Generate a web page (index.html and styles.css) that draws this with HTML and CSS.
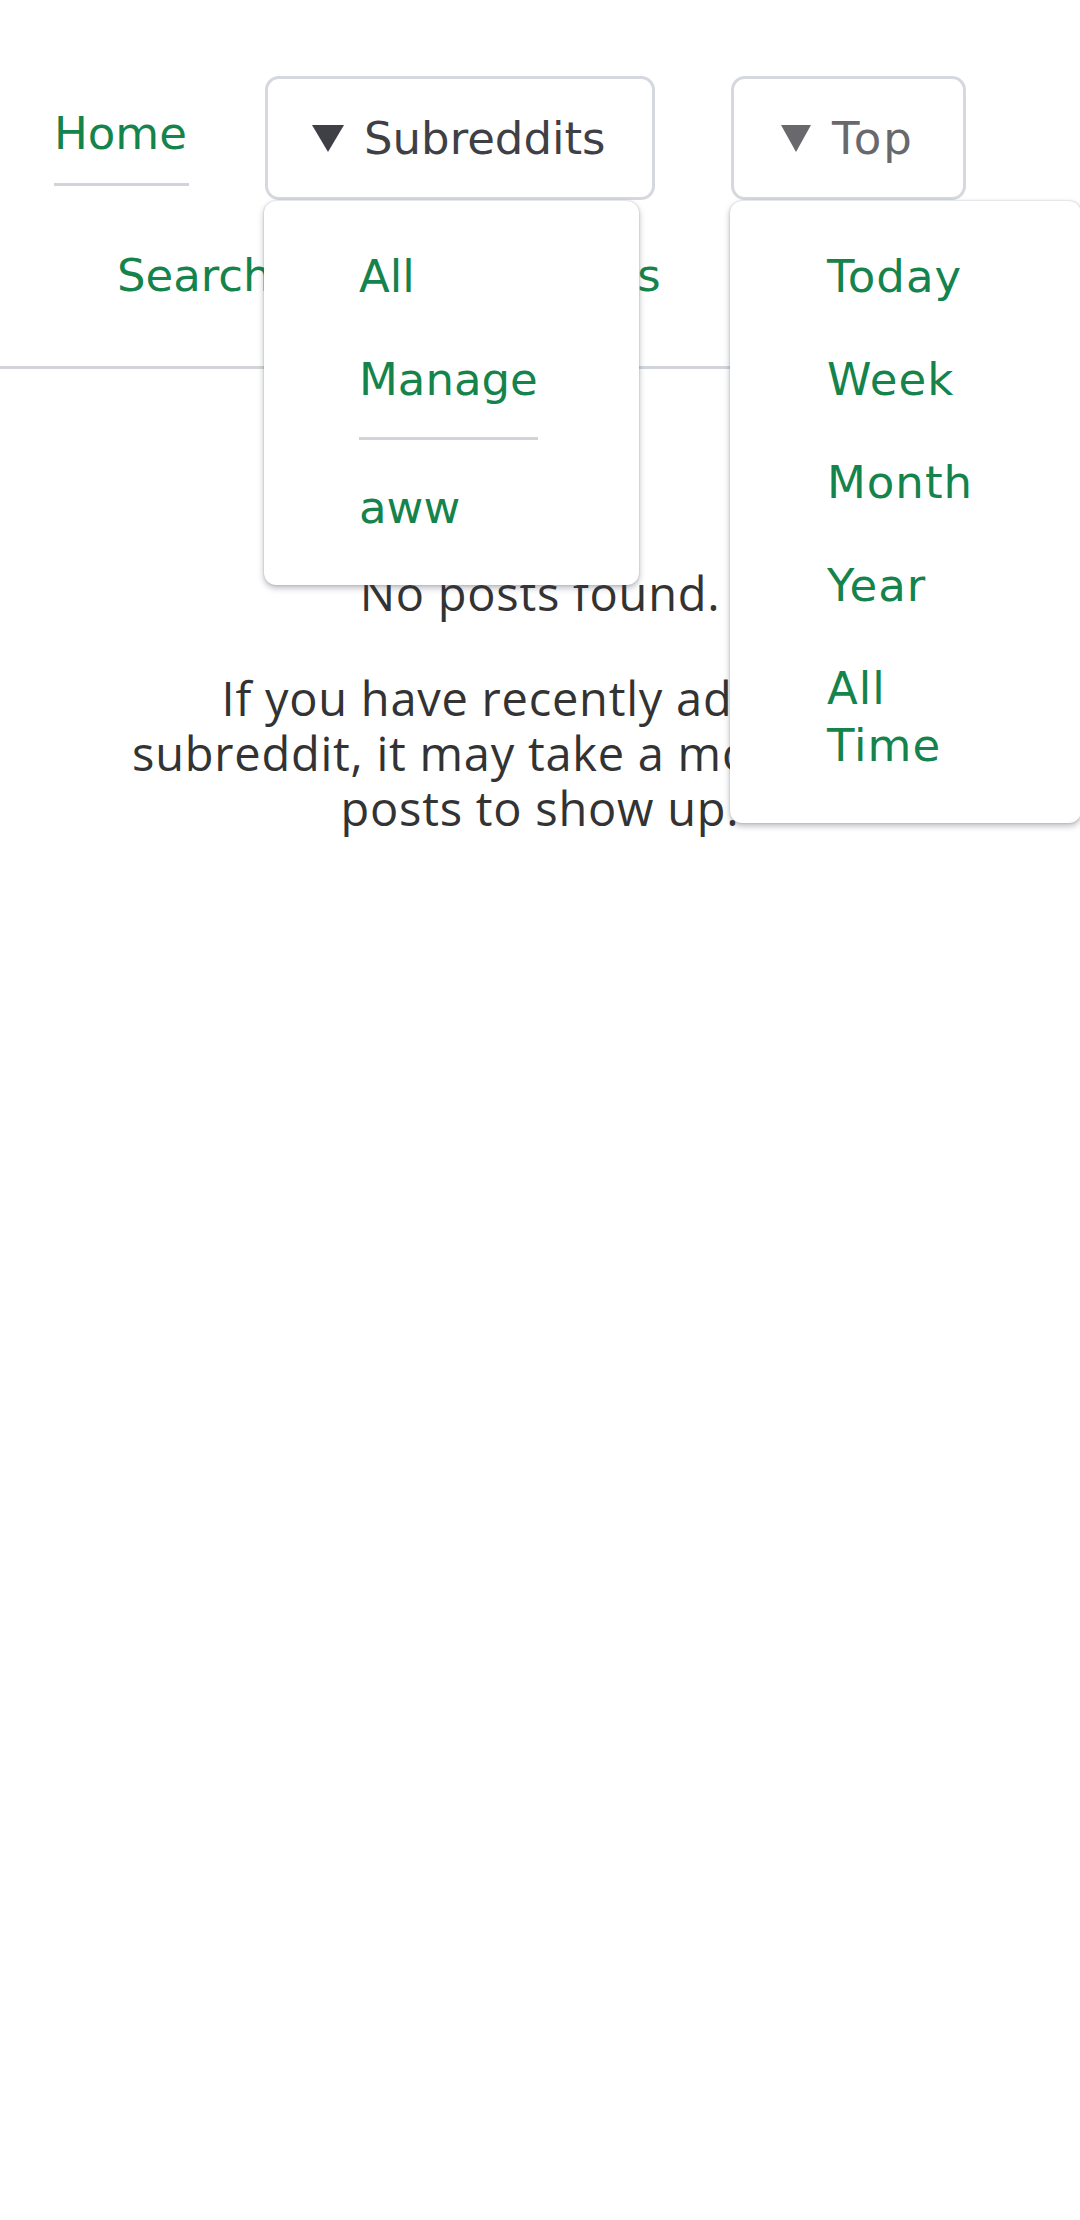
FILE: index.html
```html
<!DOCTYPE html>
<html lang="en">
<head>
<meta charset="utf-8">
<title>Reddit viewer</title>
<link rel="stylesheet" href="styles.css">
</head>
<body>
<header class="nav">
  <div class="nav-row">
    <a class="nav-link active" href="#">Home</a>
    <div class="dropdown">
      <button class="dd-btn dark" type="button">
        <svg class="tri" width="32" height="27" viewBox="0 0 32 27"><polygon points="0,0 32,0 16,27" fill="currentColor"/></svg>
        <span>Subreddits</span>
      </button>
      <div class="menu menu-subs">
        <a class="menu-item" href="#">All</a>
        <a class="menu-item current" href="#">Manage</a>
        <a class="menu-item" href="#">aww</a>
      </div>
    </div>
    <div class="dropdown">
      <button class="dd-btn muted" type="button">
        <svg class="tri" width="30" height="27" viewBox="0 0 30 27"><polygon points="0,0 30,0 15,27" fill="currentColor"/></svg>
        <span>Top</span>
      </button>
      <div class="menu menu-top">
        <a class="menu-item" href="#">Today</a>
        <a class="menu-item" href="#">Week</a>
        <a class="menu-item" href="#">Month</a>
        <a class="menu-item" href="#">Year</a>
        <a class="menu-item" href="#">All Time</a>
      </div>
    </div>
  </div>
  <div class="nav-row second">
    <a class="nav-link" href="#">Search</a>
    <a class="nav-link" href="#">Subscriptions</a>
  </div>
</header>
<main class="empty">
  <p>No posts found.</p>
  <p>If you have recently added a subreddit, it may take a moment for posts to show up.</p>
</main>
</body>
</html>
```
FILE: styles.css
```css
html, body {
  margin: 0;
  padding: 0;
  background: #ffffff;
}

body {
  font-family: "DejaVu Sans", "Liberation Sans", sans-serif;
  overflow-x: hidden;
}

a {
  text-decoration: none;
}

.nav {
  padding: 76px 0 38px;
  border-bottom: 3px solid #d1d5db;
}

.nav-row {
  display: flex;
  align-items: flex-start;
  gap: 76px;
  padding-left: 54px;
}

.nav-row.second {
  margin-top: 18px;
  padding-left: 117px;
  gap: 86px;
}

.nav-link {
  display: block;
  min-width: 135px;
  font-size: 45px;
  line-height: 57px;
  color: #15834c;
  padding: 29px 0 21px;
  border-bottom: 3px solid transparent;
}

.nav-link.active {
  border-bottom-color: #d1d5db;
}

.dropdown {
  position: relative;
}

.dd-btn {
  display: flex;
  align-items: center;
  gap: 20px;
  box-sizing: border-box;
  height: 124px;
  padding: 0 0 0 44px;
  background: #ffffff;
  border: 3px solid #d5d8df;
  border-radius: 14px;
  font-family: "DejaVu Sans", "Liberation Sans", sans-serif;
  font-size: 45px;
  line-height: 57px;
  cursor: pointer;
}

.dd-btn.dark {
  width: 390px;
  color: #3f3f46;
}

.dd-btn.muted {
  width: 235px;
  padding-left: 47px;
  gap: 21px;
  color: #68686d;
  letter-spacing: 2px;
}

.tri {
  display: block;
  flex: none;
}

.menu {
  position: absolute;
  top: calc(100% + 1px);
  left: -1px;
  box-sizing: border-box;
  display: flex;
  flex-direction: column;
  align-items: flex-start;
  padding: 24px 96px 26px 95px;
  background: #ffffff;
  border-radius: 12px;
  box-shadow: 0 3px 6px rgba(60, 64, 80, 0.35), 0 0 2px rgba(60, 64, 80, 0.3);
  z-index: 10;
}

.menu-subs {
  width: 375px;
}

.menu-top {
  width: 351px;
  padding-left: 97px;
}

.menu-item {
  display: block;
  padding: 23px 0;
  font-size: 45px;
  line-height: 57px;
  color: #15834c;
}

.menu-top .menu-item {
  letter-spacing: 1px;
}

.menu-item.current {
  padding-bottom: 29px;
  border-bottom: 3px solid #d1d5db;
  margin-bottom: 16px;
}

.empty {
  padding-top: 197px;
  width: 880px;
  margin: 0 auto;
  text-align: center;
  font-family: "Open Sans", "Liberation Sans", sans-serif;
  font-size: 47px;
  line-height: 55px;
  letter-spacing: 0.75px;
  color: #333333;
}

.empty p {
  margin: 0 0 50px;
}
```
